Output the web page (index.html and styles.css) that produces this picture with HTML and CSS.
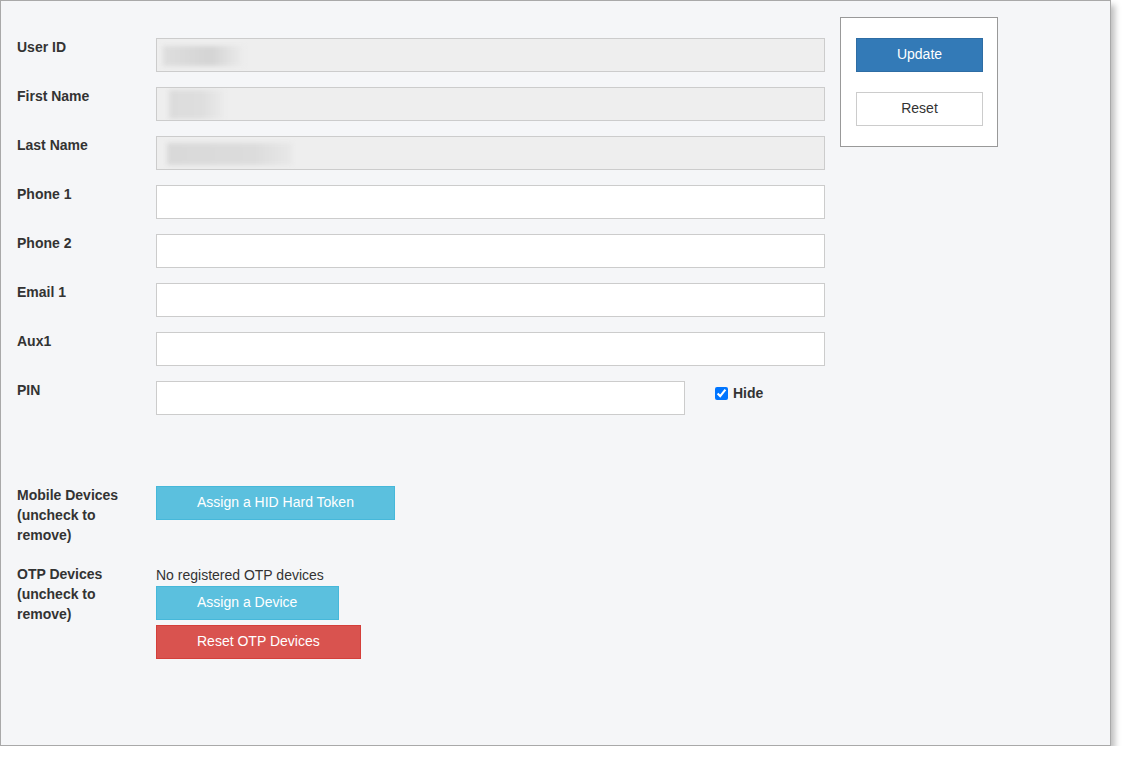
FILE: index.html
```html
<!DOCTYPE html>
<html lang="en">
<head>
    <meta charset="UTF-8">
    <meta name="viewport" content="width=device-width, initial-scale=1.0">
    <title>User Details</title>
    <link rel="stylesheet" href="styles.css">
</head>
<body>
    <div class="panel">
        <div class="user-form">
            <div class="row">
                <label class="field-label">User ID</label>
                <div class="field readonly"><span class="blur blur-id"></span></div>
            </div>
            <div class="row">
                <label class="field-label">First Name</label>
                <div class="field readonly"><span class="blur blur-first"></span></div>
            </div>
            <div class="row">
                <label class="field-label">Last Name</label>
                <div class="field readonly"><span class="blur blur-last"></span></div>
            </div>
            <div class="row">
                <label class="field-label">Phone 1</label>
                <input class="field" type="text">
            </div>
            <div class="row">
                <label class="field-label">Phone 2</label>
                <input class="field" type="text">
            </div>
            <div class="row">
                <label class="field-label">Email 1</label>
                <input class="field" type="text">
            </div>
            <div class="row">
                <label class="field-label">Aux1</label>
                <input class="field" type="text">
            </div>
            <div class="row">
                <label class="field-label">PIN</label>
                <div class="pin-group">
                    <input class="field pin-field" type="password">
                    <label class="hide-check"><input type="checkbox" checked> Hide</label>
                </div>
            </div>

            <div class="row devices-row">
                <label class="field-label">Mobile Devices (uncheck to remove)</label>
                <div class="device-list">
                    <button class="btn btn-info">Assign a HID Hard Token</button>
                </div>
            </div>
            <div class="row otp-row">
                <label class="field-label">OTP Devices (uncheck to remove)</label>
                <div class="device-list">
                    <div class="no-devices">No registered OTP devices</div>
                    <button class="btn btn-info btn-wide">Assign a Device</button>
                    <button class="btn btn-danger">Reset OTP Devices</button>
                </div>
            </div>
        </div>

        <div class="actions">
            <button class="btn btn-primary">Update</button>
            <button class="btn btn-default">Reset</button>
        </div>
    </div>
</body>
</html>
```

FILE: styles.css
```css
body {
    margin: 0;
    background: #ffffff;
    font-family: 'Liberation Sans', Arial, sans-serif;
    font-size: 14px;
    color: #333333;
}
.panel {
    width: 1109px;
    height: 744px;
    border: 1px solid #a9a9a9;
    background: #f5f6f8;
    box-shadow: 4px 5px 6px rgba(0, 0, 0, 0.25);
    display: flex;
    align-items: flex-start;
    gap: 15px;
}
.user-form {
    padding: 37px 0 0 16px;
    width: 808px;
}
.row {
    display: grid;
    grid-template-columns: 139px 669px;
    margin-bottom: 15px;
}
.field-label {
    font-weight: bold;
    line-height: 20px;
    padding-right: 20px;
    margin-top: -1px;
}
.field {
    box-sizing: border-box;
    height: 34px;
    width: 669px;
    margin: 0;
    border: 1px solid #cccccc;
    background: #ffffff;
    font-family: inherit;
    font-size: 14px;
    padding: 6px 12px;
}
.readonly {
    background: #eeeeee;
    position: relative;
    padding: 0;
    overflow: hidden;
}
.blur {
    position: absolute;
    filter: blur(2px);
}
.blur-id {
    left: 6px;
    top: 7px;
    width: 81px;
    height: 20px;
    background: linear-gradient(90deg, #dedede, #d4d4d4 60%, #ececec);
}
.blur-first {
    left: 12px;
    top: 2px;
    width: 55px;
    height: 29px;
    background: linear-gradient(90deg, #dcdcdc, #dedede 60%, #ebebeb);
}
.blur-last {
    left: 10px;
    top: 6px;
    width: 125px;
    height: 22px;
    background: linear-gradient(90deg, #d9d9d9, #dcdcdc 70%, #e8e8e8);
}
.pin-group {
    display: flex;
    align-items: flex-start;
}
.pin-field {
    width: 529px;
}
.hide-check {
    margin-left: 30px;
    padding-top: 2px;
    font-weight: bold;
    line-height: 20px;
    display: flex;
    align-items: center;
    gap: 5px;
}
.hide-check input {
    margin: 0;
    width: 13px;
    height: 13px;
}
.devices-row {
    margin-top: 71px;
    margin-bottom: 20px;
}
.device-list {
    display: flex;
    flex-direction: column;
    align-items: flex-start;
}
.no-devices {
    line-height: 20px;
    margin-bottom: 1px;
}
.btn {
    box-sizing: border-box;
    height: 34px;
    padding: 0 40px 2px;
    border: 1px solid transparent;
    font-family: inherit;
    font-size: 14px;
    line-height: 30px;
    color: #ffffff;
    cursor: pointer;
}
.btn-wide {
    padding-right: 41px;
}
.btn-info {
    background: #5bc0de;
    border-color: #46b8da;
}
.btn-danger {
    background: #d9534f;
    border-color: #d43f3a;
    margin-top: 5px;
}
.actions {
    margin-top: 16px;
    width: 126px;
    padding: 20px 15px;
    border: 1px solid #999999;
    background: #ffffff;
    display: flex;
    flex-direction: column;
    gap: 20px;
}
.btn-primary {
    background: #337ab7;
    border-color: #2e6da4;
    width: 127px;
    padding: 0 0 2px;
}
.btn-default {
    background: #ffffff;
    border-color: #cccccc;
    color: #333333;
    width: 127px;
    padding: 0 0 2px;
}
```
